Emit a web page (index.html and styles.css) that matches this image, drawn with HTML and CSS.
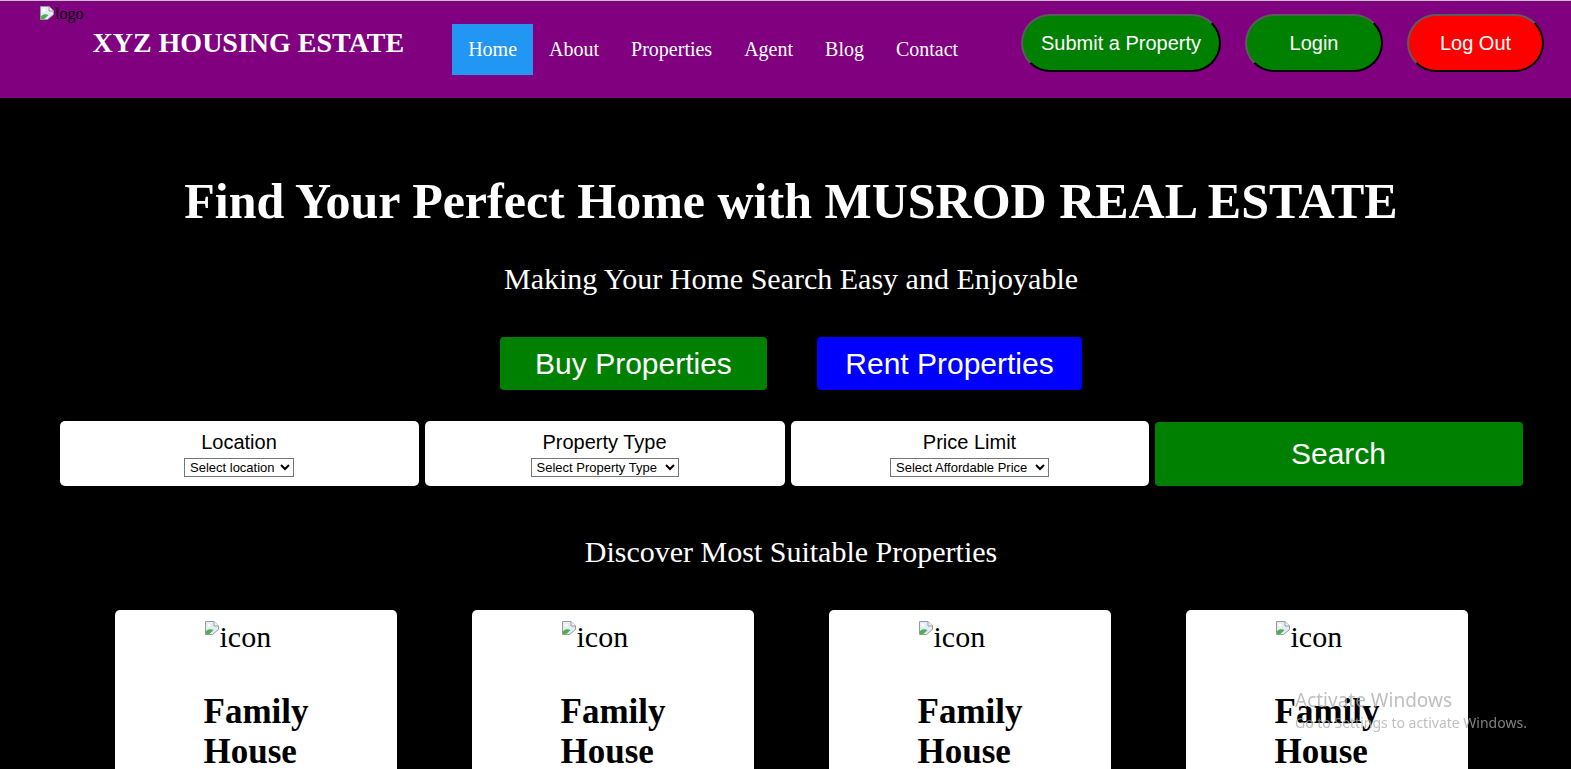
FILE: index.html
```html
<!DOCTYPE html>
<html lang="en">
<head>
<meta charset="utf-8">
<title>XYZ Housing Estate</title>
<link rel="stylesheet" href="styles.css">
</head>
<body>
<header class="site-header">
  <div class="brand">
    <span class="broken-img logo">
      <svg class="broken-icon" viewBox="0 0 16 16" width="16" height="16" aria-hidden="true">
        <path d="M1.5 1.5h8.5l4.5 4.5v3.5l-6 5h-7z" fill="#e3edf7" stroke="#9a9a9a"/>
        <path d="M10 1.5v4.5h4.5" fill="#f4f4f4" stroke="#9a9a9a"/>
        <path d="M2 14V11.2c2.2-2 4.6-2.4 7.6-1.2L5.4 14z" fill="#4caf50"/>
        <circle cx="5" cy="5.2" r="1.6" fill="#fff"/>
      </svg>logo</span>
    <h1 class="brand-title">XYZ HOUSING ESTATE</h1>
  </div>
  <nav class="main-nav">
    <a class="nav-link active" href="#">Home</a>
    <a class="nav-link" href="#">About</a>
    <a class="nav-link" href="#">Properties</a>
    <a class="nav-link" href="#">Agent</a>
    <a class="nav-link" href="#">Blog</a>
    <a class="nav-link" href="#">Contact</a>
  </nav>
  <div class="header-actions">
    <button class="pill pill-submit">Submit a Property</button>
    <button class="pill pill-login">Login</button>
    <button class="pill pill-logout">Log Out</button>
  </div>
</header>

<main class="page">
  <section class="hero">
    <h2 class="hero-title">Find Your Perfect Home with MUSROD REAL ESTATE</h2>
    <p class="hero-sub">Making Your Home Search Easy and Enjoyable</p>
    <div class="hero-actions">
      <button class="cta cta-buy">Buy Properties</button>
      <button class="cta cta-rent">Rent Properties</button>
    </div>
  </section>

  <form class="search-bar">
    <div class="search-field">
      <label class="field-label">Location</label>
      <select class="field-select sel-location">
        <option>Select location</option>
      </select>
    </div>
    <div class="search-field">
      <label class="field-label">Property Type</label>
      <select class="field-select sel-type">
        <option>Select Property Type</option>
      </select>
    </div>
    <div class="search-field">
      <label class="field-label">Price Limit</label>
      <select class="field-select sel-price">
        <option>Select Affordable Price</option>
      </select>
    </div>
    <button type="button" class="search-btn">Search</button>
  </form>

  <h3 class="section-title">Discover Most Suitable Properties</h3>

  <div class="cards">
    <div class="prop-card">
      <span class="broken-img card-icon">
        <svg class="broken-icon" viewBox="0 0 16 16" width="16" height="16" aria-hidden="true">
          <path d="M1.5 1.5h8.5l4.5 4.5v3.5l-6 5h-7z" fill="#e3edf7" stroke="#9a9a9a"/>
          <path d="M10 1.5v4.5h4.5" fill="#f4f4f4" stroke="#9a9a9a"/>
          <path d="M2 14V11.2c2.2-2 4.6-2.4 7.6-1.2L5.4 14z" fill="#4caf50"/>
          <circle cx="5" cy="5.2" r="1.6" fill="#fff"/>
        </svg>icon</span>
      <h4 class="card-title">Family House</h4>
    </div>
    <div class="prop-card">
      <span class="broken-img card-icon">
        <svg class="broken-icon" viewBox="0 0 16 16" width="16" height="16" aria-hidden="true">
          <path d="M1.5 1.5h8.5l4.5 4.5v3.5l-6 5h-7z" fill="#e3edf7" stroke="#9a9a9a"/>
          <path d="M10 1.5v4.5h4.5" fill="#f4f4f4" stroke="#9a9a9a"/>
          <path d="M2 14V11.2c2.2-2 4.6-2.4 7.6-1.2L5.4 14z" fill="#4caf50"/>
          <circle cx="5" cy="5.2" r="1.6" fill="#fff"/>
        </svg>icon</span>
      <h4 class="card-title">Family House</h4>
    </div>
    <div class="prop-card">
      <span class="broken-img card-icon">
        <svg class="broken-icon" viewBox="0 0 16 16" width="16" height="16" aria-hidden="true">
          <path d="M1.5 1.5h8.5l4.5 4.5v3.5l-6 5h-7z" fill="#e3edf7" stroke="#9a9a9a"/>
          <path d="M10 1.5v4.5h4.5" fill="#f4f4f4" stroke="#9a9a9a"/>
          <path d="M2 14V11.2c2.2-2 4.6-2.4 7.6-1.2L5.4 14z" fill="#4caf50"/>
          <circle cx="5" cy="5.2" r="1.6" fill="#fff"/>
        </svg>icon</span>
      <h4 class="card-title">Family House</h4>
    </div>
    <div class="prop-card">
      <span class="broken-img card-icon">
        <svg class="broken-icon" viewBox="0 0 16 16" width="16" height="16" aria-hidden="true">
          <path d="M1.5 1.5h8.5l4.5 4.5v3.5l-6 5h-7z" fill="#e3edf7" stroke="#9a9a9a"/>
          <path d="M10 1.5v4.5h4.5" fill="#f4f4f4" stroke="#9a9a9a"/>
          <path d="M2 14V11.2c2.2-2 4.6-2.4 7.6-1.2L5.4 14z" fill="#4caf50"/>
          <circle cx="5" cy="5.2" r="1.6" fill="#fff"/>
        </svg>icon</span>
      <h4 class="card-title">Family House</h4>
    </div>
  </div>
</main>

<div class="win-watermark">
  <div class="wm-title">Activate Windows</div>
  <div class="wm-text">Go to Settings to activate Windows.</div>
</div>
</body>
</html>
```

FILE: styles.css
```css
html {
  scrollbar-width: none;
}
html::-webkit-scrollbar {
  display: none;
}

body {
  margin: 0;
  background: #000;
  border-top: 1px solid #c4c4c4;
  font-family: "Liberation Serif", "Times New Roman", serif;
}

/* ---------- header ---------- */
.site-header {
  display: flex;
  align-items: flex-start;
  height: 97px;
  padding: 0 27px 0 39px;
  background: #800080;
}

.brand {
  display: flex;
  align-items: flex-start;
}

.broken-img {
  display: flex;
  align-items: flex-start;
  color: #000;
}

.broken-icon {
  flex: none;
  display: block;
}

.logo {
  margin-top: 4px;
  font-size: 16px;
  line-height: 18px;
}

.brand-title {
  margin: 26px 0 0 9px;
  font-size: 28px;
  line-height: 32px;
  font-weight: bold;
  color: #fff;
  white-space: nowrap;
}

.main-nav {
  display: flex;
  margin: 23px 0 0 48px;
}

.nav-link {
  padding: 14px 16px;
  font-size: 20px;
  line-height: 23px;
  color: #fff;
  text-decoration: none;
}

.nav-link.active {
  background: #2196f3;
}

.header-actions {
  display: flex;
  gap: 24px;
  margin: 13px 0 0 auto;
}

.pill {
  box-sizing: border-box;
  height: 58px;
  padding: 0;
  border: 2px solid;
  border-color: #5c5c5c #000 #000 #5c5c5c;
  border-radius: 30px;
  font-family: "Liberation Sans", Arial, sans-serif;
  font-size: 20px;
  line-height: 24px;
  color: #fff;
  text-align: center;
  cursor: pointer;
}

.pill-submit {
  width: 200px;
  background: #008000;
}

.pill-login {
  width: 138px;
  background: #008000;
}

.pill-logout {
  width: 137px;
  background: #ff0000;
}

/* ---------- hero ---------- */
.page {
  padding-left: 11px;
  text-align: center;
  color: #fff;
}

.hero {
  padding-top: 75px;
}

.hero-title {
  margin: 0;
  font-size: 50px;
  line-height: 56px;
  font-weight: bold;
}

.hero-sub {
  margin: 33px 0 0;
  font-size: 30px;
  line-height: 34px;
}

.hero-actions {
  display: flex;
  justify-content: center;
  gap: 50px;
  margin-top: 41px;
}

.cta {
  box-sizing: border-box;
  height: 53px;
  padding: 0;
  border: none;
  border-radius: 4px;
  font-family: "Liberation Sans", Arial, sans-serif;
  font-size: 30px;
  line-height: 35px;
  color: #fff;
  cursor: pointer;
}

.cta-buy {
  width: 267px;
  background: #008000;
}

.cta-rent {
  width: 265px;
  background: #0000ff;
}

/* ---------- search ---------- */
.search-bar {
  display: grid;
  grid-template-columns: 359px 360px 358px 368px;
  gap: 6px;
  width: 1463px;
  margin: 31px auto 0;
}

.search-field {
  box-sizing: border-box;
  height: 65px;
  padding-top: 10px;
  background: #fff;
  border-radius: 5px;
  color: #000;
  font-family: "Liberation Sans", Arial, sans-serif;
}

.field-label {
  display: block;
  font-size: 20px;
  line-height: 23px;
}

.field-select {
  box-sizing: border-box;
  height: 19px;
  margin-top: 4px;
  padding: 0 0 0 1px;
  border: 1px solid #767676;
  border-radius: 0;
  background: #fff;
  color: #000;
  font-family: "Liberation Sans", Arial, sans-serif;
  font-size: 13px;
}

.sel-location {
  width: 110px;
}

.sel-type {
  width: 148px;
}

.sel-price {
  width: 159px;
}

.search-btn {
  align-self: end;
  height: 64px;
  border: none;
  border-radius: 4px;
  background: #008000;
  color: #fff;
  font-family: "Liberation Sans", Arial, sans-serif;
  font-size: 30px;
  cursor: pointer;
}

/* ---------- properties ---------- */
.section-title {
  margin: 49px 0 0;
  font-size: 30px;
  line-height: 34px;
  font-weight: normal;
}

.cards {
  display: flex;
  justify-content: center;
  gap: 75px;
  margin-top: 41px;
}

.prop-card {
  box-sizing: border-box;
  width: 282px;
  padding: 10px 40px 40px 89px;
  background: #fff;
  border-radius: 5px;
  color: #000;
  text-align: left;
}

.card-icon {
  font-size: 30px;
  line-height: 34px;
}

.card-title {
  margin: 38px 0 0;
  font-size: 35px;
  line-height: 40px;
  font-weight: bold;
}

/* ---------- OS watermark overlay ---------- */
.win-watermark {
  position: fixed;
  left: 1295px;
  top: 688px;
  color: rgba(170, 170, 170, 0.75);
  font-family: "Noto Sans", "Open Sans", sans-serif;
  text-align: left;
  pointer-events: none;
}

.wm-title {
  font-size: 19px;
  line-height: 24px;
}

.wm-text {
  font-size: 14px;
  line-height: 22px;
}
```
